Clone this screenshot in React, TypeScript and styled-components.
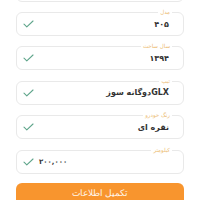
import styled, { createGlobalStyle } from 'styled-components';

const GlobalStyle = createGlobalStyle`
  html, body {
    margin: 0;
    padding: 0;
    background: #ffffff;
    overflow: hidden;
  }
  body {
    font-family: 'DejaVu Sans', 'Noto Sans', sans-serif;
  }
`;

type TField = {
  label: string;
  value: string;
  ltr?: boolean;
};

const fields: TField[] = [
  { label: 'برند', value: '' },
  { label: 'مدل', value: '۴۰۵' },
  { label: 'سال ساخت', value: '۱۳۹۴' },
  { label: 'تیپ', value: 'GLXدوگانه سوز' },
  { label: 'رنگ خودرو', value: 'نقره ای' },
  { label: 'کیلومتر', value: '۲۰۰,۰۰۰', ltr: true },
];

const CheckIcon = () => (
  <svg width="11" height="8" viewBox="0 0 11 8" fill="none">
    <path
      d="M1 4.2 L3.8 6.8 L10 1"
      stroke="#5fa58b"
      strokeWidth="1.1"
      strokeLinecap="round"
      strokeLinejoin="round"
    />
  </svg>
);

export default function App() {
  return (
    <>
      <GlobalStyle />
      <Page dir="rtl">
        {fields.map((f) => (
          <Field key={f.label}>
            <Label>{f.label}</Label>
            <Value $ltr={f.ltr}>{f.value}</Value>
            <CheckSlot $ltr={f.ltr}>
              <CheckIcon />
            </CheckSlot>
          </Field>
        ))}
        <SubmitButton>تکمیل اطلاعات</SubmitButton>
      </Page>
    </>
  );
}

const Page = styled.div`
  display: flex;
  flex-direction: column;
  gap: 10.4px;
  padding: 0 16px;
  margin-top: -22.4px;
`;

const Field = styled.div`
  position: relative;
  display: flex;
  align-items: center;
  height: 24px;
  box-sizing: border-box;
  border: 1px solid #e9e9e9;
  border-radius: 6px;
  padding: 0 14px 0 6px;
`;

const Label = styled.span`
  position: absolute;
  top: -4px;
  right: 11px;
  padding: 0 2px;
  background: #ffffff;
  color: #ecbc74;
  font-size: 5.5px;
  line-height: 7px;
`;

const Value = styled.span<{ $ltr?: boolean }>`
  flex: 1;
  color: #333333;
  font-size: ${({ $ltr }) => ($ltr ? '7px' : '8px')};
  font-weight: 700;
  text-align: ${({ $ltr }) => ($ltr ? 'left' : 'right')};
  order: ${({ $ltr }) => ($ltr ? 2 : 1)};
  padding-left: ${({ $ltr }) => ($ltr ? '5px' : '0')};
  direction: rtl;
`;

const CheckSlot = styled.span<{ $ltr?: boolean }>`
  display: flex;
  align-items: center;
  order: ${({ $ltr }) => ($ltr ? 3 : 2)};
  margin-right: ${({ $ltr }) => ($ltr ? '0' : 'auto')};
`;

const SubmitButton = styled.button`
  border: none;
  border-radius: 6px;
  background: #f8952e;
  color: #fff6ec;
  font-family: 'DejaVu Sans', sans-serif;
  font-size: 8.5px;
  font-weight: 300;
  line-height: 14px;
  padding: 2.5px 0 8px;
  margin-top: -0.5px;
`;
